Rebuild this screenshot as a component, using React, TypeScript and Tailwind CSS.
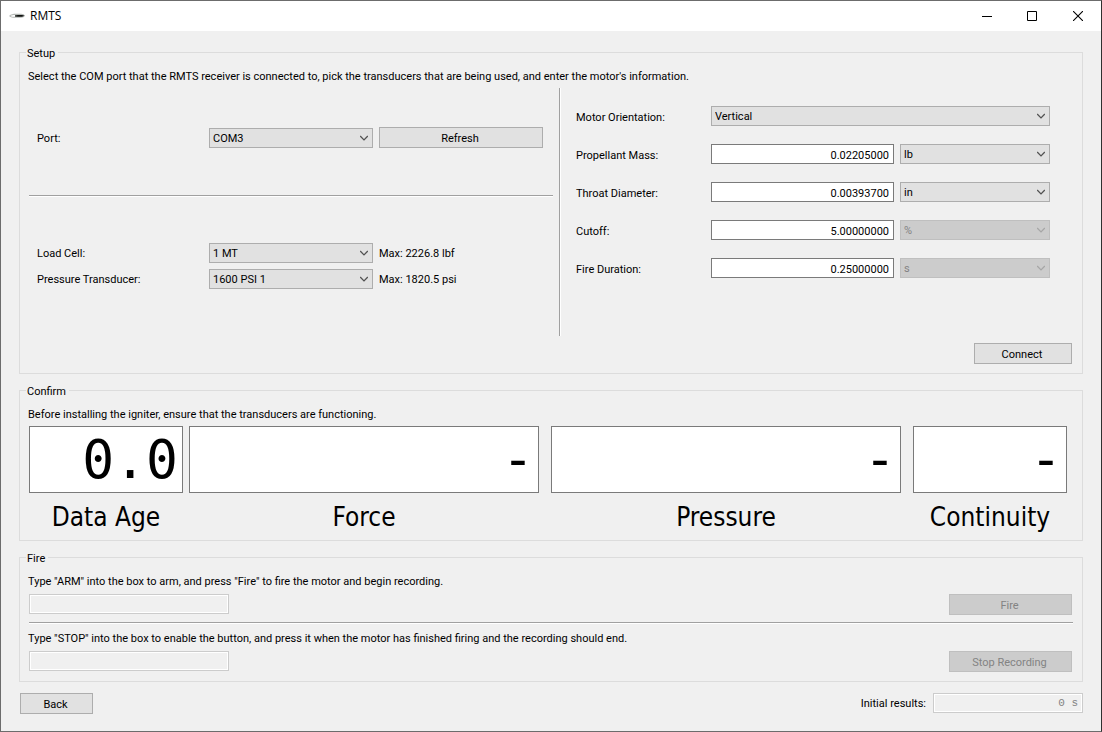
import type { ReactNode } from "react";

function Chevron({ disabled }: { disabled?: boolean }) {
  return (
    <svg
      className={`pointer-events-none absolute top-1/2 right-[5px] -translate-y-1/2 ${disabled ? "text-[#a6a6a6]" : "text-[#505050]"}`}
      width="8"
      height="6"
      viewBox="0 0 8 6"
      fill="none"
      stroke="currentColor"
      strokeWidth="1.2"
    >
      <path d="M0.2 1 4 4.8 7.8 1" />
    </svg>
  );
}

function Select({ id, label, value, disabled }: { id: string; label?: string; value: string; disabled?: boolean }) {
  return (
    <div className="relative">
      <select
        id={id}
        aria-label={label}
        disabled={disabled}
        defaultValue={value}
        className="block h-5 w-full appearance-none border border-[#adadad] bg-[#e1e1e1] pt-[2px] pr-4 pl-[3px] leading-4 disabled:border-[#bfbfbf] disabled:bg-[#cccccc] disabled:text-[#838383] disabled:opacity-100"
      >
        <option>{value}</option>
      </select>
      <Chevron disabled={disabled} />
    </div>
  );
}

function Button({ children, className = "", disabled }: { children: ReactNode; className?: string; disabled?: boolean }) {
  return (
    <button
      type="button"
      disabled={disabled}
      className={`h-[21px] border border-[#adadad] bg-[#e1e1e1] pt-[2px] pr-[2px] leading-4 disabled:border-[#bfbfbf] disabled:bg-[#cccccc] disabled:text-[#838383] ${className}`}
    >
      {children}
    </button>
  );
}

function Group({ title, className = "", children }: { title: string; className?: string; children: ReactNode }) {
  return (
    <fieldset className={`min-w-0 border border-[#dcdcdc] px-[6px] ${className}`}>
      <legend className="h-[17px] pr-[3px] pl-px leading-[20px]">{title}</legend>
      <div className="px-[3px] pt-2">{children}</div>
    </fieldset>
  );
}

function Rule({ className = "" }: { className?: string }) {
  return <hr className={`h-[2px] border-t border-b border-t-[#a0a0a0] border-b-white ${className}`} />;
}

const parameters = [
  { id: "mass", label: "Propellant Mass:", value: "0.02205000", unit: "lb", fixed: false },
  { id: "throat", label: "Throat Diameter:", value: "0.00393700", unit: "in", fixed: false },
  { id: "cutoff", label: "Cutoff:", value: "5.00000000", unit: "%", fixed: true },
  { id: "duration", label: "Fire Duration:", value: "0.25000000", unit: "s", fixed: true },
];

const readouts = [
  { id: "age", label: "Data Age", value: "0.0", pad: "pr-[6px]" },
  { id: "force", label: "Force", value: "-", pad: "pr-3" },
  { id: "pressure", label: "Pressure", value: "-", pad: "pr-3" },
  { id: "continuity", label: "Continuity", value: "-", pad: "pr-[6px]" },
];

const disabledField = "h-5 border border-[#cccccc] bg-[#f0f0f0] ring-1 ring-inset ring-white";

function TitleBar() {
  return (
    <header className="flex h-[30px] items-center bg-white pl-2">
      <svg width="16" height="6" viewBox="0 0 16 6" className="mr-[5px]">
        <path d="M0 3C2 1.2 4 .8 7 .8h5c2 0 3.400.9 4 2-.8 1.300-2 2-4 2H7C4 4.900 2 4.600 0 3z" fill="#b4b8b5" />
        <path d="M1.500 3c1-.8 2.500-.9 4.500-.9v1.700c-2 0-3.500 0-4.500-.8z" fill="#fff" />
        <path d="M6 2.600 9 1.900h4l2.500.9-2.500 1H9L6 3.500z" fill="#111311" />
      </svg>
      <h1 className="flex-1 font-['Open_Sans','Noto_Sans',sans-serif] text-[12px] leading-4">RMTS</h1>
      <div className="flex">
        <button type="button" aria-label="Minimize" className="flex h-[30px] w-[44px] items-center justify-center">
          <svg width="10" height="10" viewBox="0 0 10 10">
            <path d="M0 5.5h10" stroke="#000" />
          </svg>
        </button>
        <button type="button" aria-label="Maximize" className="flex h-[30px] w-[46px] items-center justify-center">
          <svg width="10" height="10" viewBox="0 0 10 10">
            <path d="M.5.5h9v9h-9z" stroke="#000" fill="none" />
          </svg>
        </button>
        <button type="button" aria-label="Close" className="flex h-[30px] w-[46px] items-center justify-center">
          <svg width="10" height="10" viewBox="0 0 10 10">
            <path d="M0 0 10 10M10 0 0 10" stroke="#000" strokeWidth="1.1" />
          </svg>
        </button>
      </div>
    </header>
  );
}

export default function App() {
  return (
    <div className="flex min-h-screen flex-col border border-[#6c6c6c] border-r-[#303030] bg-[#f0f0f0] font-[Roboto,'Liberation_Sans',sans-serif] text-[11px] leading-4 text-black">
      <TitleBar />
      <main className="px-[18px] pt-[13px] pb-4">
        <Group title="Setup">
          <p className="-ml-px">
            Select the COM port that the RMTS receiver is connected to, pick the transducers that are being used, and
            enter the motor's information.
          </p>
          <div className="mt-[3px] grid grid-cols-[524fr_2px_506fr] gap-[6px]">
            <div className="flex flex-col">
              <div className="grid h-[107px] grid-cols-[172px_1fr_1fr] items-center gap-x-[6px] pr-[10px] pb-2 pl-[2px]">
                <label htmlFor="port" className="pt-[3px] pl-[6px]">
                  Port:
                </label>
                <Select id="port" value="COM3" />
                <Button>Refresh</Button>
              </div>
              <Rule />
              <div className="grid flex-1 grid-cols-[172px_1fr_1fr] content-center items-center gap-x-[6px] gap-y-[6px] pr-[10px] pb-[2px] pl-[2px]">
                <label htmlFor="loadcell" className="pt-[3px] pl-[6px]">
                  Load Cell:
                </label>
                <Select id="loadcell" value="1 MT" />
                <span className="pt-[3px]">Max: 2226.8 lbf</span>
                <label htmlFor="transducer" className="pt-[3px] pl-[6px]">
                  Pressure Transducer:
                </label>
                <Select id="transducer" value="1600 PSI 1" />
                <span className="pt-[3px]">Max: 1820.5 psi</span>
              </div>
            </div>
            <div className="h-[248px] border-r border-l border-l-[#a0a0a0] border-r-white" />
            <div className="grid grid-cols-[129px_1fr_150px] content-start items-center gap-x-[6px] gap-y-[18px] pt-[18px] pr-[23px] pl-[9px]">
              <label htmlFor="orientation" className="pt-[3px]">
                Motor Orientation:
              </label>
              <div className="col-span-2">
                <Select id="orientation" value="Vertical" />
              </div>
              {parameters.map((p) => (
                <div key={p.id} className="col-span-3 grid grid-cols-subgrid items-center">
                  <label htmlFor={p.id} className="pt-[3px]">
                    {p.label}
                  </label>
                  <input
                    id={p.id}
                    type="text"
                    defaultValue={p.value}
                    className="h-5 w-full min-w-0 border border-[#7a7a7a] bg-white px-1 pt-[2px] text-right leading-4"
                  />
                  <Select id={`${p.id}-unit`} label={`${p.label} unit`} value={p.unit} disabled={p.fixed} />
                </div>
              ))}
            </div>
          </div>
          <div className="flex justify-end pt-[7px] pr-px pb-[9px]">
            <Button className="w-[98px]">Connect</Button>
          </div>
        </Group>

        <Group title="Confirm" className="mt-[8px]">
          <p className="-ml-px">Before installing the igniter, ensure that the transducers are functioning.</p>
          <div className="mt-[3px] grid grid-cols-[160fr_362fr_362fr_160fr] pb-[6px] font-['DejaVu_Sans_Condensed','DejaVu_Sans',sans-serif]">
            {readouts.map((r) => (
              <div key={r.id} className={`flex min-w-0 flex-col items-stretch ${r.pad}`}>
                <input
                  id={r.id}
                  readOnly
                  defaultValue={r.value}
                  className="h-[67px] w-full min-w-0 border border-[#7a7a7a] bg-white px-1 text-right font-['DejaVu_Sans_Mono',monospace] text-[53px] leading-[64px]"
                />
                <label htmlFor={r.id} className="mt-[7px] text-center text-[26px] leading-[34px]">
                  {r.label}
                </label>
              </div>
            ))}
          </div>
        </Group>

        <Group title="Fire" className="mt-[8px]">
          <label htmlFor="arm" className="-ml-px block">
            Type "ARM" into the box to arm, and press "Fire" to fire the motor and begin recording.
          </label>
          <div className="mt-1 flex items-start justify-between pr-px">
            <input id="arm" type="text" disabled className={`${disabledField} w-[200px]`} />
            <Button disabled className="w-[123px]">
              Fire
            </Button>
          </div>
          <Rule className="my-[7px]" />
          <label htmlFor="stop" className="-ml-px block">
            Type "STOP" into the box to enable the button, and press it when the motor has finished firing and the
            recording should end.
          </label>
          <div className="mt-1 flex items-start justify-between pr-px pb-[9px]">
            <input id="stop" type="text" disabled className={`${disabledField} w-[200px]`} />
            <Button disabled className="w-[123px]">
              Stop Recording
            </Button>
          </div>
        </Group>

        <footer className="mt-[11px] flex items-start pl-px">
          <Button className="w-[73px]">Back</Button>
          <label htmlFor="results" className="mt-[3px] mr-[7px] ml-auto">
            Initial results:
          </label>
          <input
            id="results"
            type="text"
            disabled
            defaultValue="0 s"
            className={`${disabledField} w-[150px] px-1 text-right font-['Liberation_Mono',monospace] text-[#838383]`}
          />
        </footer>
      </main>
    </div>
  );
}
